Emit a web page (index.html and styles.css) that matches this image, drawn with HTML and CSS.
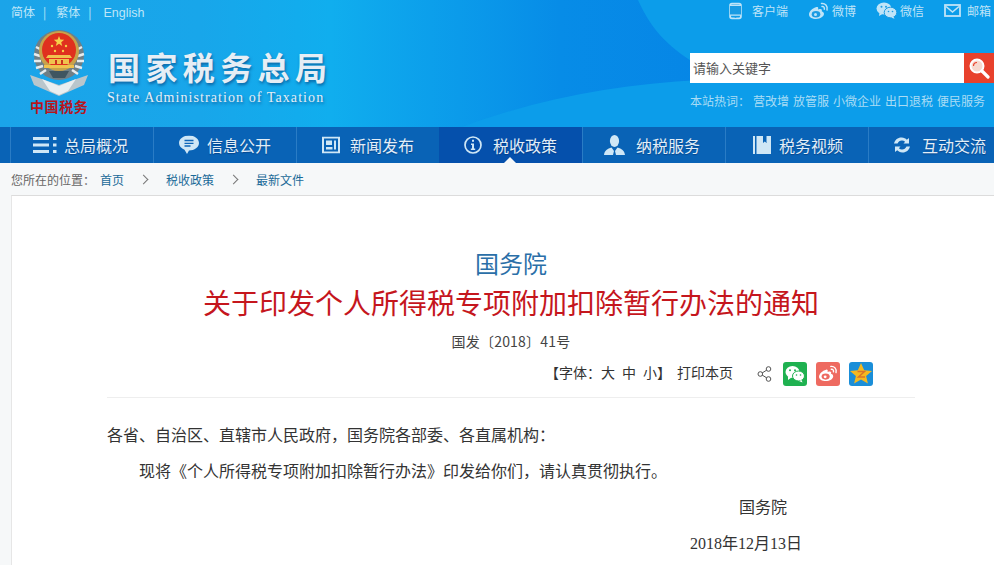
FILE: index.html
```html
<!DOCTYPE html>
<html lang="zh-CN">
<head>
    <meta charset="UTF-8">
    <meta name="viewport" content="width=device-width, initial-scale=1.0">
    <title>关于印发个人所得税专项附加扣除暂行办法的通知</title>
    <link rel="stylesheet" href="styles.css">
</head>
<body>
    <header class="header">
        <svg class="header-bg" width="994" height="127" viewBox="0 0 994 127"><path d="M638 0C652 32 672 50 700 66V80C620 84 540 98 462 127H994V0Z" fill="#0c9dea"/></svg>
        <div class="header-left">
            <div class="lang">
                <a>简体</a><i>|</i><a>繁体</a><i>|</i><a class="lang-en">English</a>
            </div>
            <div class="brand">
                <div class="logo">
                    <svg class="emblem" width="62" height="68" viewBox="0 0 62 68">
                        <path d="M2 46 L31 56 L60 46 L56 56 L31 67 L6 56 Z" fill="#b9c6cc"/>
                        <path d="M14 50 L31 57 L48 50 L40 62 L31 66 L22 62 Z" fill="#e9eef0"/>
                        <ellipse cx="31" cy="26" rx="25" ry="25" fill="#6f7f86"/>
                        <path d="M8 18 l6 3 M6 25 l6 2 M6 32 l7 0 M8 39 l7 -2 M12 45 l6 -4 M54 18 l-6 3 M56 25 l-6 2 M56 32 l-7 0 M54 39 l-7 -2 M50 45 l-6 -4" stroke="#e6ecee" stroke-width="2.5"/>
                        <circle cx="31" cy="22" r="20" fill="#c9a24a"/>
                        <circle cx="31" cy="21" r="17" fill="#e0301e"/>
                        <path d="M31 7 l1.4 3.6 3.8 .2 -3 2.4 1 3.7 -3.2 -2.1 -3.2 2.1 1 -3.7 -3 -2.4 3.8 -.2 Z" fill="#f6d04a"/>
                        <circle cx="24" cy="17" r="1.2" fill="#f6d04a"/>
                        <circle cx="38" cy="17" r="1.2" fill="#f6d04a"/>
                        <circle cx="27" cy="22" r="1.2" fill="#f6d04a"/>
                        <circle cx="35" cy="22" r="1.2" fill="#f6d04a"/>
                        <path d="M18 29 H44 L42 26 H20 Z M21 30 H41 V35 H21 Z M16 36 H46 V39 H16 Z" fill="#f0c24e"/>
                        <path d="M27 31 h2 v4 h-2 Z M33 31 h2 v4 h-2 Z" fill="#c9341f"/>
                        <path d="M21 42 H41 L37 49 H25 Z" fill="#3f5560"/>
                    </svg>
                    <span class="logo-text">中国税务</span>
                </div>
                <div class="site-name">
                    <div class="site-cn">国家税务总局</div>
                    <div class="site-en">State Administration of Taxation</div>
                </div>
            </div>
        </div>
        <div class="header-right">
            <div class="tools">
                <a class="tool tool-app">
                    <svg width="13" height="18" viewBox="0 0 14 18"><rect x="1.2" y="1" width="11.6" height="16" rx="2" fill="none" stroke="#bfe4f8" stroke-width="2"/><rect x="1" y="3" width="12" height="10.5" fill="#1a9be3"/><path d="M1 3h12M1 13.5h12" stroke="#bfe4f8" stroke-width="1.4"/><circle cx="7" cy="15.4" r="1" fill="#1a9be3"/></svg>
                    <span>客户端</span>
                </a>
                <a class="tool tool-weibo">
                    <svg width="21" height="18" viewBox="0 0 21 18"><path d="M8.5 5C4.5 6 1 9.5 1 12.5 1 15.500 4.500 17 8 17c4.500 0 8-2.600 8-5.200 0-1.800-1.900-2.300-2.300-2.500.5-1.200.3-2.300-1.400-2.300-1 0-2.300.5-2.300.5s.7-1.900-.3-2.500C9.300 4.800 8.900 4.900 8.500 5Z" fill="#bfe4f8"/><ellipse cx="8" cy="12.300" rx="4.300" ry="3.200" fill="#1a9be3"/><circle cx="7.500" cy="12.500" r="1.500" fill="#bfe4f8"/><path d="M13.500 1.500c3.500-.5 6.500 2.500 5.500 6.500M14 4.500c1.700-.2 2.700 1 2.300 2.700" fill="none" stroke="#bfe4f8" stroke-width="1.500" stroke-linecap="round"/></svg>
                    <span>微博</span>
                </a>
                <a class="tool tool-wechat">
                    <svg width="21" height="17" viewBox="0 0 21 17"><ellipse cx="8" cy="6.500" rx="7.500" ry="6" fill="#bfe4f8"/><path d="M3.500 10.500 3 14l3.500-2Z" fill="#bfe4f8"/><ellipse cx="14.500" cy="10.500" rx="6.300" ry="5.300" fill="#bfe4f8" stroke="#1a9be3"/><path d="M17.500 14.500 18.500 16.800 15 15.500Z" fill="#bfe4f8"/><circle cx="5.500" cy="4.800" r="1" fill="#1a9be3"/><circle cx="10" cy="4.800" r="1" fill="#1a9be3"/><circle cx="12.500" cy="9.500" r=".8" fill="#1a9be3"/><circle cx="16.500" cy="9.500" r=".8" fill="#1a9be3"/></svg>
                    <span>微信</span>
                </a>
                <a class="tool tool-mail">
                    <svg width="17" height="13" viewBox="0 0 17 13"><rect x="1" y="1" width="15" height="11" fill="none" stroke="#bfe4f8" stroke-width="1.800"/><path d="M2 2.500 8.500 8 15 2.500" fill="none" stroke="#bfe4f8" stroke-width="1.600"/></svg>
                    <span>邮箱</span>
                </a>
            </div>
            <div class="search">
                <span class="search-input">请输入关键字</span>
                <a class="search-btn">
                    <svg width="22" height="22" viewBox="0 0 22 22"><circle cx="9" cy="9" r="6.500" fill="#f7d9cf" stroke="#fff" stroke-width="2"/><path d="M5.500 9a3.500 3.500 0 0 1 3.500-3.500" fill="none" stroke="#e8412c" stroke-width="1.200"/><path d="M14 14l6 6" stroke="#fff" stroke-width="3.200" stroke-linecap="round"/></svg>
                </a>
            </div>
            <div class="hot">
                <span class="hot-label">本站热词&#xFF1A;</span>
                <a>营改增</a><a>放管服</a><a>小微企业</a><a>出口退税</a><a>便民服务</a>
            </div>
        </div>
    </header>

    <nav class="nav">
        <a class="nav-item">
            <svg class="nav-icon" width="24" height="16" viewBox="0 0 24 16"><path d="M0 0h16v3H0ZM0 6.500h16v3H0ZM0 13h16v3H0ZM20 0h3.500v3H20ZM20 6.500h3.500v3H20ZM20 13h3.500v3H20Z" fill="#cfe7f6"/></svg>
            <span>总局概况</span>
        </a>
        <a class="nav-item">
            <svg class="nav-icon" width="20" height="19" viewBox="0 0 20 19"><path d="M10 0C4.500 0 0 3.300 0 7.500c0 3 2.300 5.500 5.500 6.700L8 18.500l2-3.500c5.500 0 10-3.400 10-7.500S15.500 0 10 0Z" fill="#cfe7f6"/><path d="M5.500 5h9M5.500 7.800h9M5.500 10.500h6" stroke="#0d65b8" stroke-width="1.300"/></svg>
            <span>信息公开</span>
        </a>
        <a class="nav-item">
            <svg class="nav-icon" width="18" height="17" viewBox="0 0 18 17"><rect x="1" y="1" width="16" height="15" fill="none" stroke="#cfe7f6" stroke-width="2"/><path d="M4 4h6v4.500H4ZM12 4h2v9h-2ZM4 10.500h6.500V13H4Z" fill="#cfe7f6"/></svg>
            <span>新闻发布</span>
        </a>
        <a class="nav-item nav-item-active">
            <svg class="nav-icon" width="18" height="18" viewBox="0 0 18 18"><circle cx="9" cy="9" r="8" fill="none" stroke="#cfe7f6" stroke-width="1.700"/><path d="M8 3.800h2v2H8ZM7 7.500h3v5h1.200V14H6.800v-1.500H8V9H7Z" fill="#cfe7f6"/></svg>
            <span>税收政策</span>
        </a>
        <a class="nav-item">
            <svg class="nav-icon" width="21" height="20" viewBox="0 0 21 20"><ellipse cx="10.500" cy="6" rx="4.600" ry="6" fill="#cfe7f6"/><path d="M0 20c.5-4.500 3.500-6.500 7.500-7.500L10 16l-1 4ZM21 20c-.5-4.500-3.500-6.500-7.500-7.500L11 16l1 4Z" fill="#cfe7f6"/></svg>
            <span>纳税服务</span>
        </a>
        <a class="nav-item">
            <svg class="nav-icon" width="18" height="18" viewBox="0 0 18 18"><path d="M0 0h2v18H0ZM3.500 0H10v7l1.800-1.600L13.500 7V0H18v18H3.500Z" fill="#cfe7f6"/></svg>
            <span>税务视频</span>
        </a>
        <a class="nav-item">
            <svg class="nav-icon" width="18" height="17" viewBox="0 0 18 17"><path d="M1 7C2 3 5 .8 8.800 1c2.200.1 3.800 1 5 2.200L16 1.500V7h-5.500l1.600-1.800C11 4.200 10 3.800 8.800 3.900 6.800 4 5.500 5 4.500 7Z" fill="#cfe7f6"/><path d="M17 10c-1 4-4 6.200-7.800 6-2.200-.1-3.800-1-5-2.200L2 15.500V10h5.500l-1.600 1.800c1.100 1 2.100 1.400 3.300 1.300 2-.1 3.300-1.100 4.300-3.100Z" fill="#cfe7f6"/></svg>
            <span>互动交流</span>
        </a>
    </nav>

    <div class="crumbs">
        <span class="crumbs-label">您所在的位置&#xFF1A;</span>
        <a>首页</a>
        <span class="crumbs-sep"></span>
        <a>税收政策</a>
        <span class="crumbs-sep"></span>
        <a>最新文件</a>
    </div>

    <main class="article">
        <h2 class="article-org">国务院</h2>
        <h1 class="article-title">关于印发个人所得税专项附加扣除暂行办法的通知</h1>
        <div class="article-no">国发〔2018〕41号</div>
        <div class="article-tools">
            <span class="font-size">【字体&#xFF1A;<a>大</a><a>中</a><a>小</a>】</span>
            <a class="print">打印本页</a>
            <svg class="share" width="15" height="16" viewBox="0 0 15 16"><path d="M11.500 3 3.500 8l8 5" fill="none" stroke="#555" stroke-width="1"/><circle cx="11.500" cy="3" r="2.300" fill="#fff" stroke="#555"/><circle cx="3.300" cy="8" r="2.300" fill="#fff" stroke="#555"/><circle cx="11.500" cy="13" r="2.300" fill="#fff" stroke="#555"/></svg>
            <a class="share-btn share-wechat">
                <svg width="20" height="18" viewBox="0 0 20 18"><ellipse cx="7.500" cy="7" rx="7" ry="6" fill="#fff"/><path d="M3 11 3 15l3.500-2.500Z" fill="#fff"/><ellipse cx="13.500" cy="11" rx="6" ry="5" fill="#fff" stroke="#1fb150"/><path d="M16.500 15 17.500 17.500 14 16Z" fill="#fff"/><circle cx="5" cy="5.300" r="1" fill="#1fb150"/><circle cx="10" cy="5.300" r="1" fill="#1fb150"/><circle cx="11.500" cy="10" r=".8" fill="#1fb150"/><circle cx="15.500" cy="10" r=".8" fill="#1fb150"/></svg>
            </a>
            <a class="share-btn share-weibo">
                <svg width="20" height="17" viewBox="0 0 21 18"><path d="M8.500 5C4.500 6 1 9.500 1 12.500 1 15.500 4.500 17 8 17c4.500 0 8-2.600 8-5.200 0-1.800-1.900-2.300-2.300-2.500.5-1.200.3-2.300-1.400-2.300-1 0-2.300.5-2.300.5s.7-1.900-.3-2.500C9.300 4.800 8.900 4.900 8.500 5Z" fill="#fff"/><ellipse cx="8" cy="12.300" rx="4.300" ry="3.200" fill="#ee6a60"/><circle cx="7.500" cy="12.500" r="1.500" fill="#fff"/><path d="M13.500 1.500c3.500-.5 6.500 2.500 5.500 6.500M14 4.500c1.700-.2 2.700 1 2.300 2.700" fill="none" stroke="#fff" stroke-width="1.500" stroke-linecap="round"/></svg>
            </a>
            <a class="share-btn share-qzone">
                <svg width="22" height="21" viewBox="0 0 22 21"><path d="M11 0l3.200 7.200 7.800.7-5.900 5.100 1.800 7.600L11 16.600l-6.900 4 1.800-7.600L0 7.900l7.800-.7Z" fill="#f5b81f"/><path d="M7.500 8.500h7l-6 5.500h6.500" fill="none" stroke="#d9722a" stroke-width="1.500"/></svg>
            </a>
        </div>
        <div class="article-body">
            <p>各省、自治区、直辖市人民政府&#xFF0C;国务院各部委、各直属机构&#xFF1A;</p>
            <p class="indent">现将《个人所得税专项附加扣除暂行办法》印发给你们&#xFF0C;请认真贯彻执行。</p>
            <p class="sign-org">国务院</p>
            <p class="sign-date">2018年12月13日</p>
        </div>
    </main>
</body>
</html>
```

FILE: styles.css
```css
* {
    box-sizing: border-box;
}

html, body {
    margin: 0;
    height: 100%;
    overflow: hidden;
}

body {
    background-color: #f6f8f9;
    color: #333;
    font-family: "Noto Sans CJK SC", "Liberation Sans", sans-serif;
    font-size: 12px;
}

/* 顶部 */
.header {
    position: relative;
    display: flex;
    justify-content: space-between;
    height: 127px;
    background-image: linear-gradient(90deg, #1ba4e9 0, #18a6ea 200px, #10aeee 330px, #078ce7 560px, #0686e6 700px);
}

.header-bg {
    position: absolute;
    top: 0;
    left: 0;
}

.header-left,
.header-right {
    position: relative;
}

.header-left {
    padding: 3px 0 0 11px;
}

.lang {
    display: flex;
    align-items: baseline;
    height: 16px;
    color: #bfe6f8;
}

.lang i {
    font-style: normal;
    margin: 0 8px;
}

.lang i + a {
    margin-left: 2px;
}

.lang i + .lang-en {
    margin-left: 4px;
    font-family: "Liberation Sans", sans-serif;
    font-size: 12.5px;
}

.brand {
    display: flex;
    margin: 10px 0 0 17px;
}

.logo {
    display: flex;
    flex-direction: column;
    align-items: center;
    width: 62px;
}

.logo-text {
    width: 62px;
    margin-top: -1px;
    padding-left: 2px;
    color: #b8141c;
    font-size: 14px;
    font-weight: 700;
    line-height: 20px;
    letter-spacing: .6px;
    white-space: nowrap;
}

.site-name {
    margin: 17px 0 0 18px;
    color: #e6eef5;
    text-shadow: 1px 2px 3px rgba(0, 50, 110, .55);
}

.site-cn {
    font-size: 32px;
    font-weight: 700;
    line-height: 40px;
    letter-spacing: 5.4px;
    white-space: nowrap;
}

.site-en {
    margin: 2px 0 0 -1px;
    font-family: "Liberation Serif", serif;
    font-size: 14px;
    line-height: 19px;
    letter-spacing: 1.080px;
    white-space: nowrap;
}

.header-right {
    width: 304px;
    padding-top: 1px;
}

.tools {
    display: flex;
    justify-content: flex-end;
    align-items: center;
    height: 19px;
    padding-right: 3px;
    color: #bfe4f8;
}

.tool {
    display: flex;
    align-items: center;
    gap: 3px;
    margin-left: 20px;
    white-space: nowrap;
}

.tool-app {
    gap: 10px;
}

.tool-mail {
    gap: 6px;
}

.search {
    display: flex;
    height: 30px;
    margin-top: 33px;
}

.search-input {
    flex: 1;
    padding-left: 3px;
    background-color: #fff;
    color: #555;
    font-size: 13px;
    line-height: 29px;
}

.search-btn {
    display: flex;
    justify-content: center;
    align-items: center;
    width: 30px;
    background-color: #e8412c;
}

.hot {
    display: flex;
    align-items: center;
    gap: 4px;
    height: 18px;
    margin-top: 8px;
    color: #a9dcf5;
    white-space: nowrap;
}

.hot-label {
    margin-right: -1px;
}

/* 导航 */
.nav {
    display: flex;
    height: 36px;
    padding-left: 10px;
    background-color: #0963b6;
}

.nav-item {
    position: relative;
    display: flex;
    flex: 0 0 143px;
    align-items: center;
    padding-left: 53px;
    border-left: 1px solid #2a7cc5;
    color: #e2eef8;
    font-size: 16px;
    text-shadow: 0 1px 1px rgba(0, 40, 100, .5);
    white-space: nowrap;
}

.nav-icon {
    position: absolute;
    top: 50%;
    left: 24px;
    transform: translateY(-50%);
}

.nav-item:nth-child(1) .nav-icon {
    left: 22px;
}

.nav-item:nth-child(2) .nav-icon,
.nav-item:nth-child(3) .nav-icon {
    left: 25px;
}

.nav-item:nth-child(5) .nav-icon {
    left: 21px;
}

.nav-item:nth-child(6) .nav-icon {
    left: 27px;
}

.nav-item-active {
    background-color: #0550ac;
    border-left-color: #0550ac;
}

.nav-item-active::after {
    content: "";
    position: absolute;
    bottom: 0;
    left: 64px;
    border: 6px solid transparent;
    border-top: 0;
    border-bottom-color: #f6f8f9;
}

/* 面包屑 */
.crumbs {
    display: flex;
    align-items: center;
    height: 32px;
    padding-left: 11px;
    color: #1b6a98;
}

.crumbs-label {
    margin-right: 5px;
    color: #666;
}

.crumbs-sep {
    width: 7px;
    height: 7px;
    margin: 0 19px 0 16px;
    border-top: 1px solid #777;
    border-right: 1px solid #777;
    transform: rotate(45deg);
}

/* 正文 */
.article {
    height: 370px;
    margin-left: 11px;
    padding: 47px 79px 0 95px;
    border-top: 1px solid #dcdcdc;
    border-left: 1px solid #e6e6e6;
    background-color: #fff;
}

.article-org {
    margin: 0;
    color: #2b6fa8;
    font-size: 24px;
    font-weight: 400;
    line-height: 40px;
    text-align: center;
}

.article-title {
    margin: -1px 0 0;
    color: #c5161d;
    font-size: 28px;
    font-weight: 400;
    line-height: 40px;
    text-align: center;
    white-space: nowrap;
}

.article-no {
    color: #444;
    font-size: 14px;
    line-height: 38px;
    letter-spacing: .2px;
    text-align: center;
}

.article-tools {
    display: flex;
    justify-content: flex-end;
    align-items: center;
    height: 38px;
    padding: 1px 42px 11px 0;
    border-bottom: 1px solid #eee;
    color: #333;
    font-size: 14px;
}

.font-size,
.print {
    margin-bottom: 4px;
}

.font-size a {
    margin-right: 7px;
}

.font-size a:nth-child(3) {
    margin-right: 0;
}

.print {
    margin-left: 6px;
}

.share {
    margin: 0 11px 0 24px;
}

.share-btn {
    display: flex;
    justify-content: center;
    align-items: center;
    width: 24px;
    height: 24px;
    margin-left: 9px;
    border-radius: 3px;
}

.share-wechat {
    margin-left: 0;
    background-color: #1fb150;
}

.share-weibo {
    background-color: #ee6a60;
}

.share-qzone {
    background-color: #1a8ed8;
}

.article-body {
    margin-top: 20px;
    color: #333;
    font-family: "Liberation Serif", "Noto Sans CJK SC", serif;
    font-size: 16px;
    line-height: 36px;
}

.article-body p {
    margin: 0;
    white-space: nowrap;
}

.indent {
    text-indent: 32px;
}

.sign-org {
    padding-right: 128px;
    text-align: right;
}

.sign-date {
    padding-right: 113px;
    text-align: right;
}
```
